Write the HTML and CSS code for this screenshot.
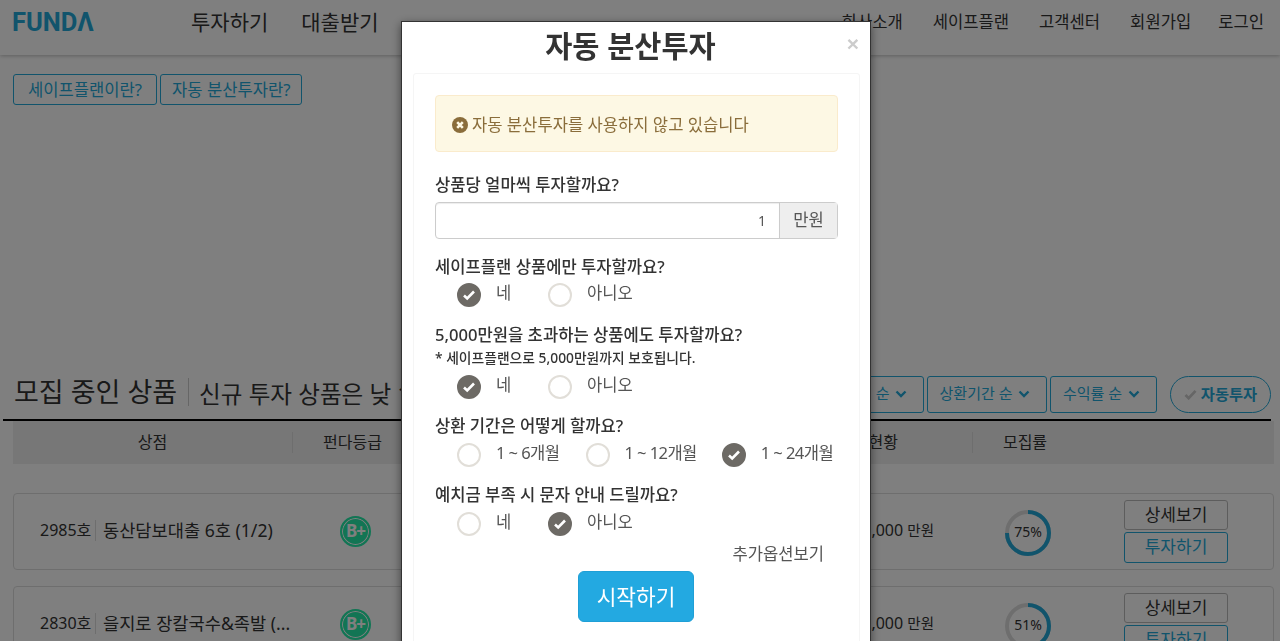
FILE: index.html
```html
<!DOCTYPE html>
<html lang="ko">
<head>
    <meta charset="UTF-8">
    <meta name="viewport" content="width=device-width, initial-scale=1.0">
    <title>FUNDA</title>
    <link rel="stylesheet" href="styles.css">
</head>
<body>

    <header class="header">
        <a class="logo">FUNDΛ</a>
        <nav class="nav-main">
            <a>투자하기</a>
            <a>대출받기</a>
        </nav>
        <nav class="nav-sub">
            <a>회사소개</a>
            <a>세이프플랜</a>
            <a>고객센터</a>
            <a>회원가입</a>
            <a>로그인</a>
        </nav>
    </header>

    <div class="help-links">
        <a class="btn-line">세이프플랜이란?</a>
        <a class="btn-line btn-line-tight">자동 분산투자란?</a>
    </div>

    <section class="list-head">
        <h2>모집 중인 상품</h2>
        <p>신규 투자 상품은 낮 12시</p>
        <div class="sort-btns">
            <a class="btn-sort">모집금액 순 <svg viewBox="0 0 12 8"><path d="M1.5 1.5 6 6l4.5-4.5"/></svg></a>
            <a class="btn-sort">상환기간 순 <svg viewBox="0 0 12 8"><path d="M1.5 1.5 6 6l4.5-4.5"/></svg></a>
            <a class="btn-sort">수익률 순 <svg viewBox="0 0 12 8"><path d="M1.5 1.5 6 6l4.5-4.5"/></svg></a>
            <a class="btn-auto"><svg viewBox="0 0 14 12"><path d="M1.5 6.5 5 10l7.500-8"/></svg>자동투자</a>
        </div>
    </section>

    <div class="table-head">
        <span class="col-name">상점</span>
        <span class="col-grade">펀다등급</span>
        <span class="col-status">현황</span>
        <span class="col-rate">모집률</span>
    </div>

    <article class="card">
        <span class="card-no">2985호</span>
        <span class="card-name">동산담보대출 6호 (1/2)</span>
        <span class="badge">B+</span>
        <span class="card-amount">45,000 <small>만원</small></span>
        <span class="ring">
            <svg viewBox="0 0 46 46"><circle class="ring-bg" cx="23" cy="23" r="21"/><circle class="ring-bar" cx="23" cy="23" r="21" pathLength="100" stroke-dasharray="75 100"/></svg>
            <b>75%</b>
        </span>
        <span class="card-btns">
            <a class="btn-detail">상세보기</a>
            <a class="btn-invest">투자하기</a>
        </span>
    </article>

    <article class="card">
        <span class="card-no">2830호</span>
        <span class="card-name">을지로 장칼국수&amp;족발 (...</span>
        <span class="badge">B+</span>
        <span class="card-amount">12,000 <small>만원</small></span>
        <span class="ring">
            <svg viewBox="0 0 46 46"><circle class="ring-bg" cx="23" cy="23" r="21"/><circle class="ring-bar" cx="23" cy="23" r="21" pathLength="100" stroke-dasharray="51 100"/></svg>
            <b>51%</b>
        </span>
        <span class="card-btns">
            <a class="btn-detail">상세보기</a>
            <a class="btn-invest">투자하기</a>
        </span>
    </article>

    <div class="overlay">
        <div class="modal">
            <button class="close">×</button>
            <h1>자동 분산투자</h1>
            <div class="panel">
                <div class="alert">
                    <svg viewBox="0 0 16 16"><circle cx="8" cy="8" r="8"/><path d="M5.200 5.200l5.600 5.600M10.800 5.200l-5.600 5.600"/></svg>
                    자동 분산투자를 사용하지 않고 있습니다
                </div>

                <label class="q q-first">상품당 얼마씩 투자할까요?</label>
                <div class="input-group">
                    <input type="text" value="1">
                    <span class="addon">만원</span>
                </div>

                <label class="q">세이프플랜 상품에만 투자할까요?</label>
                <div class="radios">
                    <span class="radio on"><i><svg viewBox="0 0 14 12"><path d="M2 6.500 5.200 9.500 12 2.500"/></svg></i><em class="short">네</em></span>
                    <span class="radio"><i></i><em>아니오</em></span>
                </div>

                <label class="q q-gap">5,000만원을 초과하는 상품에도 투자할까요?</label>
                <p class="note">* 세이프플랜으로 5,000만원까지 보호됩니다.</p>
                <div class="radios">
                    <span class="radio on"><i><svg viewBox="0 0 14 12"><path d="M2 6.500 5.200 9.500 12 2.500"/></svg></i><em class="short">네</em></span>
                    <span class="radio"><i></i><em>아니오</em></span>
                </div>

                <label class="q">상환 기간은 어떻게 할까요?</label>
                <div class="radios radios-period">
                    <span class="radio"><i></i><em>1 ~ 6개월</em></span>
                    <span class="radio"><i></i><em>1 ~ 12개월</em></span>
                    <span class="radio on"><i><svg viewBox="0 0 14 12"><path d="M2 6.500 5.200 9.500 12 2.500"/></svg></i><em>1 ~ 24개월</em></span>
                </div>

                <label class="q q-gap">예치금 부족 시 문자 안내 드릴까요?</label>
                <div class="radios radios-last">
                    <span class="radio"><i></i><em class="short">네</em></span>
                    <span class="radio on"><i><svg viewBox="0 0 14 12"><path d="M2 6.500 5.200 9.500 12 2.500"/></svg></i><em>아니오</em></span>
                </div>

                <a class="more">추가옵션보기</a>
                <button class="btn-start">시작하기</button>
            </div>
        </div>
    </div>

</body>
</html>
```

FILE: styles.css
```css
* {
    box-sizing: border-box;
}

html, body {
    height: 100%;
    overflow: hidden;
}

body {
    margin: 0;
    padding: 0;
    background-color: #fff;
    color: #333;
    font-family: "Noto Sans", "Noto Sans CJK KR", sans-serif;
    font-size: 16px;
}

/* header */
.header {
    display: flex;
    align-items: center;
    height: 55px;
    padding: 0 16px 0 12px;
    background-color: #fff;
    box-shadow: 0 1px 4px rgba(0, 0, 0, 0.25);
}

.logo {
    width: 179px;
    margin-top: -12px;
    color: #23a9d9;
    font-family: "Roboto", sans-serif;
    font-size: 25.500px;
    font-weight: 700;
}

.nav-main {
    display: flex;
    gap: 33px;
    margin-top: -14px;
    font-size: 21px;
}

.nav-sub {
    display: flex;
    gap: 30px;
    margin-left: auto;
    margin-top: -13px;
    font-size: 16.600px;
}

.nav-sub a:last-child {
    margin-left: -3px;
}

.help-links {
    display: flex;
    gap: 3px;
    padding: 19px 13px 0;
}

.btn-line {
    padding: 0 14px;
    height: 31px;
    line-height: 29px;
    border: 1px solid #23a9d9;
    border-radius: 3px;
    color: #23a9d9;
    font-size: 16.600px;
}

.btn-line-tight {
    padding: 0 11px;
}

/* list */
.list-head {
    display: flex;
    align-items: center;
    height: 46px;
    margin: 270px 9px 0 3px;
    padding-bottom: 6px;
    border-bottom: 2px solid #000;
    white-space: nowrap;
}

.list-head h2 {
    margin: -4px 0 0 11px;
    padding-right: 11px;
    border-right: 1px solid #ccc;
    font-size: 27px;
    font-weight: 400;
    line-height: 28px;
}

.list-head p {
    margin: -3px 0 0 10px;
    font-size: 23.600px;
}

.sort-btns {
    display: flex;
    align-items: center;
    gap: 3px;
    margin-left: auto;
}

.btn-sort {
    display: flex;
    align-items: center;
    justify-content: center;
    gap: 6px;
    width: 120px;
    height: 37px;
    padding: 0 4px 3px 0;
    border: 1px solid #23a9d9;
    border-radius: 3px;
    color: #23a9d9;
    font-size: 15px;
}

.btn-sort:nth-child(3) {
    width: 107px;
}

.btn-sort svg {
    width: 12px;
    height: 8px;
    margin-top: 3px;
    fill: none;
    stroke: #23a9d9;
    stroke-width: 2.4;
}

.btn-auto {
    display: flex;
    align-items: center;
    justify-content: center;
    gap: 4px;
    width: 101px;
    height: 37px;
    margin-left: 10px;
    padding-bottom: 2px;
    border: 1px solid #23a9d9;
    border-radius: 19px;
    color: #23a9d9;
    font-size: 15.300px;
    font-weight: 700;
}

.btn-auto svg {
    width: 13px;
    height: 11px;
    margin-top: 2px;
    fill: none;
    stroke: #ccc;
    stroke-width: 3;
}

.table-head {
    display: flex;
    align-items: center;
    height: 43px;
    margin: 0 6px 0 13px;
    background-color: #eee;
    font-size: 16px;
}

.table-head span {
    display: block;
    height: 21px;
    line-height: 21px;
    text-align: center;
    border-right: 1px solid #ddd;
}

.col-name {
    width: 280px;
}

.col-grade {
    width: 120px;
}

.col-status {
    width: 560px;
    padding-left: 440px;
    padding-right: 74px;
    text-align: right !important;
}

.col-rate {
    width: 104px;
    border-right: none !important;
}

.card {
    display: flex;
    align-items: center;
    height: 77px;
    margin: 0 6px 16px 13px;
    border: 1px solid #ddd;
    border-radius: 4px;
    font-size: 16px;
}

.table-head + .card {
    margin-top: 29px;
}

.card-no {
    width: 82px;
    margin-top: -3px;
    padding-left: 26px;
    padding-right: 5px;
    border-right: 1px solid #ddd;
    line-height: 21px;
    text-align: right;
    white-space: nowrap;
}

.card-name {
    width: 226px;
    margin-top: -4px;
    padding-left: 7px;
    font-size: 17.600px;
    white-space: nowrap;
}

.badge {
    display: block;
    width: 31px;
    height: 31px;
    margin-left: 18px;
    border: 2px solid #24eaa8;
    border-radius: 50%;
    background-color: #24eaa8;
    box-shadow: inset 0 0 0 1px #fff;
    color: #fff;
    font-size: 17px;
    font-weight: 700;
    letter-spacing: -1px;
    line-height: 26px;
    text-align: center;
}

.card-amount {
    width: 563px;
    margin-top: -4px;
    text-align: right;
    font-size: 16px;
}

.card-amount small {
    font-size: 14.500px;
}

.ring {
    position: relative;
    display: block;
    width: 46px;
    height: 46px;
    margin-left: 71px;
    margin-top: 3px;
}

.ring svg {
    width: 46px;
    height: 46px;
    transform: rotate(-90deg);
}

.ring circle {
    fill: none;
    stroke-width: 4;
}

.ring-bg {
    stroke: #ddd;
}

.ring-bar {
    stroke: #23a9d9;
}

.ring b {
    position: absolute;
    left: 0;
    right: 0;
    top: -1px;
    font-size: 14px;
    font-weight: 400;
    line-height: 46px;
    text-align: center;
}

.card-btns {
    display: flex;
    flex-direction: column;
    gap: 2px;
    margin-left: 73px;
}

.card-btns a {
    display: block;
    width: 104px;
    height: 30px;
    border: 1px solid #bbb;
    border-radius: 3px;
    font-size: 17px;
    line-height: 27px;
    text-align: center;
}

.card-btns .btn-invest {
    height: 31px;
    border-color: #23a9d9;
    color: #23a9d9;
}

/* modal */
.overlay {
    position: fixed;
    top: 0;
    left: 0;
    right: 0;
    bottom: 0;
    padding-top: 21px;
    background-color: rgba(0, 0, 0, 0.5);
    overflow: hidden;
}

.modal {
    position: relative;
    width: 470px;
    height: 700px;
    margin: 0 0 0 401px;
    padding: 0 10px 0 11px;
    background-color: #fff;
    border: 1px solid #333;
    box-shadow: 0 3px 9px rgba(0, 0, 0, 0.5);
}

.modal h1 {
    height: 51px;
    margin: 0;
    padding-right: 12px;
    font-size: 29.500px;
    font-weight: 700;
    line-height: 47px;
    text-align: center;
}

.close {
    position: absolute;
    top: 10px;
    right: 11px;
    padding: 0;
    border: none;
    background: none;
    color: #ccc;
    font-family: "Liberation Sans", sans-serif;
    font-size: 21px;
    font-weight: 700;
    line-height: 24px;
}

.panel {
    height: 640px;
    padding: 21px;
    border: 1px solid #f5f5f5;
    border-radius: 3px;
}

.alert {
    display: flex;
    align-items: center;
    gap: 4px;
    height: 57px;
    padding: 0 16px;
    background-color: #fdf8e4;
    border: 1px solid #faebcc;
    border-radius: 4px;
    color: #8a6d3b;
    font-size: 16.600px;
}

.alert svg {
    width: 16px;
    height: 16px;
    margin-top: 2px;
}

.alert svg circle {
    fill: #8a6d3b;
}

.alert svg path {
    fill: none;
    stroke: #fdf8e4;
    stroke-width: 2.6;
}

.q {
    display: block;
    height: 22px;
    margin-top: 15px;
    color: #333;
    font-size: 16.600px;
    font-weight: 500;
    line-height: 24px;
}

.q-gap {
    margin-top: 16px;
}

.q-first {
    margin-top: 21px;
}

.input-group {
    display: flex;
    height: 37px;
    margin-top: 7px;
    margin-bottom: 16px;
    border: 1px solid #ccc;
    border-radius: 4px;
}

.input-group input {
    flex: 1;
    min-width: 0;
    padding: 0 13px 0 0;
    border: none;
    border-radius: 4px 0 0 4px;
    background: none;
    box-shadow: inset 0 1px 1px rgba(0, 0, 0, 0.075);
    color: #555;
    font-family: inherit;
    font-size: 14px;
    text-align: right;
}

.addon {
    width: 58px;
    border-left: 1px solid #ccc;
    background-color: #eee;
    color: #555;
    font-size: 16.600px;
    line-height: 33px;
    text-align: center;
}

.note {
    height: 20px;
    margin: 2px 0 0;
    font-size: 13.800px;
    font-weight: 500;
    line-height: 22px;
}

.radios {
    display: flex;
    gap: 26px;
    height: 24px;
    margin-top: 6px;
    padding-left: 22px;
}

.note + .radios {
    margin-top: 8px;
}

.radios-period {
    gap: 26px;
    margin-top: 7px;
}

.radios-period .radio:first-child {
    margin-right: 1px;
}

.radios-period .radio:nth-child(2) em {
    margin-left: -1px;
}

.radios-period .radio:last-child {
    margin-left: -1px;
}

.radios-period em {
    font-size: 16px;
    letter-spacing: -0.6px;
}

.radios-last {
    margin-top: 7px;
}

.radio {
    display: flex;
    gap: 15px;
}

.radio i {
    display: flex;
    align-items: center;
    justify-content: center;
    width: 24px;
    height: 24px;
    border: 2px solid #e1ded8;
    border-radius: 50%;
}

.radio.on i {
    border-color: #6d6a65;
    background-color: #6d6a65;
}

.radio svg {
    width: 14px;
    height: 12px;
    fill: none;
    stroke: #fff;
    stroke-width: 2.6;
}

.radio em {
    color: #555;
    font-size: 16.600px;
    font-style: normal;
    line-height: 20px;
    white-space: nowrap;
}

.radio em.short {
    min-width: 26px;
}

.more {
    display: block;
    height: 22px;
    margin-top: 6px;
    padding-right: 14px;
    color: #555;
    font-size: 16.600px;
    line-height: 24px;
    text-align: right;
}

.btn-start {
    display: block;
    width: 116px;
    height: 51px;
    margin: 7px 0 0 143px;
    padding: 0 0 3px;
    border: 1px solid #1f9fd6;
    border-radius: 6px;
    background-color: #23a9e1;
    color: #fff;
    font-family: inherit;
    font-size: 21.400px;
}
```
